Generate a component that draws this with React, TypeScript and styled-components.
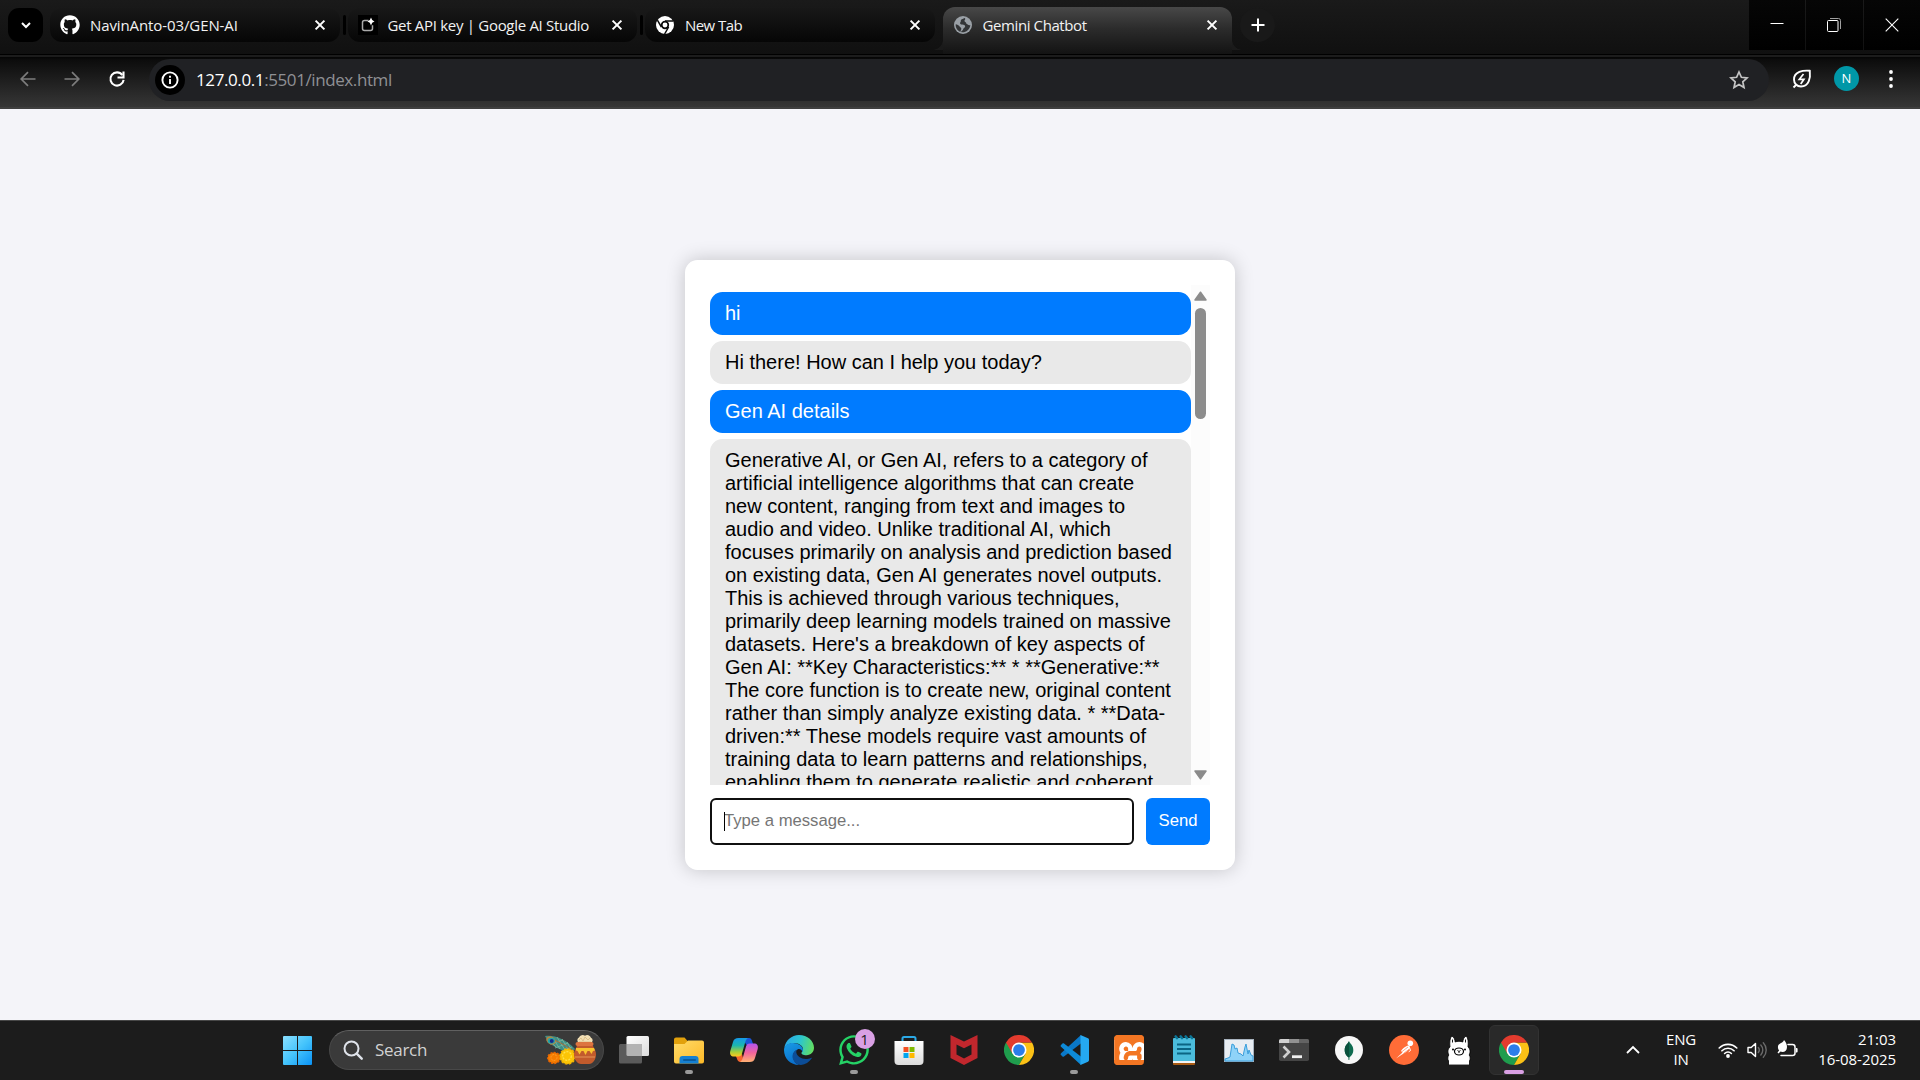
import React from "react";
import styled, { createGlobalStyle } from "styled-components";
import { FaGithub, FaWhatsapp } from "react-icons/fa";
import { SiXampp } from "react-icons/si";

const GlobalStyle = createGlobalStyle`
  * { box-sizing: border-box; }
  body { margin: 0; overflow: hidden; background: #f4f4f9; }
`;

const ui = `"Open Sans", "Noto Sans", sans-serif`;
const arial = `"Liberation Sans", Arial, sans-serif`;

const Screen = styled.div`
  width: 1920px;
  height: 1080px;
  display: flex;
  flex-direction: column;
  overflow: hidden;
  font-family: ${ui};
`;

/* ---------- browser chrome ---------- */

const TabStrip = styled.header`
  height: 54px;
  flex: none;
  display: flex;
  align-items: flex-start;
  background: linear-gradient(#1a1a1a, #101010);
`;

const TabSearch = styled.button`
  width: 35px;
  height: 34px;
  margin: 8px 7px 0 8px;
  padding: 0;
  border: 0;
  border-radius: 11px;
  background: #000;
  display: grid;
  place-items: center;
`;

const TabBox = styled.div<{ $active?: boolean }>`
  position: relative;
  width: 289.5px;
  height: ${(p) => (p.$active ? 47 : 34)}px;
  margin-top: ${(p) => (p.$active ? 7 : 8)}px;
  padding: 0 12px 0 10px;
  padding-bottom: ${(p) => (p.$active ? 12 : 0)}px;
  display: flex;
  align-items: center;
  color: #f2f2f2;
  border-radius: ${(p) => (p.$active ? "12px 12px 0 0" : "12px")};
  background: ${(p) =>
    p.$active ? "linear-gradient(#484848, #2c2c2c 45%, #131313)" : "linear-gradient(#181818, #060606)"};
  &::before,
  &::after {
    content: "";
    display: ${(p) => (p.$active ? "block" : "none")};
    position: absolute;
    bottom: 4px;
    width: 10px;
    height: 10px;
  }
  &::before {
    left: -10px;
    background: radial-gradient(circle at 0 0, transparent 9.5px, #1a1a1a 10px);
  }
  &::after {
    right: -10px;
    background: radial-gradient(circle at 100% 0, transparent 9.5px, #1a1a1a 10px);
  }
`;

const Favicon = styled.span`
  width: 20px;
  height: 20px;
  display: grid;
  place-items: center;
`;

const TabTitle = styled.span<{ $spacing?: number }>`
  flex: 1;
  margin-left: 10px;
  font-size: 15px;
  line-height: 20px;
  white-space: nowrap;
  letter-spacing: ${(p) => p.$spacing ?? 0}px;
`;

const Divider = styled.span<{ $hidden?: boolean }>`
  width: 3px;
  height: 20px;
  margin: 15px 2px 0 3px;
  border-radius: 2px;
  background: ${(p) => (p.$hidden ? "transparent" : "#000")};
`;

const NewTab = styled.button`
  width: 35px;
  height: 34px;
  margin: 8px 0 0 8px;
  padding: 0;
  border: 0;
  border-radius: 50%;
  background: #191919;
  display: grid;
  place-items: center;
`;

const WindowControls = styled.div`
  margin-left: auto;
  height: 50px;
  display: flex;
  gap: 1px;
`;

const WindowButton = styled.button`
  width: 56.4px;
  height: 50px;
  padding: 0;
  border: 0;
  background: linear-gradient(#060606, #000);
  display: grid;
  place-items: center;
`;

const Toolbar = styled.nav`
  height: 55px;
  flex: none;
  display: flex;
  align-items: center;
  border-top: 1px solid #000;
  border-bottom: 2px solid #3f3f3f;
  padding-bottom: 5px;
  background: linear-gradient(#1c1c1c 0, #1c1c1c 2px, #050505 2px, #0c0c0c 5px, #363636);
`;

const NavButton = styled.span<{ $left: number }>`
  width: 20px;
  height: 20px;
  margin-left: ${(p) => p.$left}px;
  display: grid;
  place-items: center;
`;

const AddressBar = styled.div`
  width: 1620px;
  height: 42px;
  margin: 3px 0 0 22px;
  padding: 0 20px 1px 6px;
  border-radius: 21px;
  background: #202124;
  display: flex;
  align-items: center;
`;

const InfoBadge = styled.span`
  width: 30px;
  height: 30px;
  border-radius: 50%;
  background: #000;
  display: grid;
  place-items: center;
`;

const Url = styled.span`
  flex: 1;
  margin-left: 11px;
  font-size: 17px;
  line-height: 24px;
  letter-spacing: -0.4px;
  color: #8f9094;
  b {
    font-weight: 400;
    color: #fff;
  }
`;

const Avatar = styled.span`
  width: 25px;
  height: 25px;
  margin-left: 22px;
  border-radius: 50%;
  background: #0097a7;
  color: #fff;
  font-size: 13px;
  line-height: 25px;
  text-align: center;
`;

/* ---------- chat page ---------- */

const Page = styled.main`
  height: 911px;
  flex: none;
  padding-top: 151px;
  display: flex;
  justify-content: center;
  align-items: flex-start;
  background: #f4f4f9;
  font-family: ${arial};
`;

const Card = styled.section`
  width: 550px;
  height: 610px;
  padding: 25px;
  border-radius: 12.5px;
  background: #fff;
  box-shadow: 0 0 18.75px rgba(0, 0, 0, 0.2);
`;

const ChatArea = styled.div`
  height: 500px;
  display: flex;
  overflow: hidden;
`;

const Messages = styled.div`
  width: 481px;
  height: 500px;
  padding-top: 7px;
  display: flex;
  flex-direction: column;
  gap: 6px;
  overflow: hidden;
`;

const Bubble = styled.div<{ $user?: boolean }>`
  flex: none;
  padding: 10px 15px;
  border-radius: 12.5px;
  font-size: 20px;
  line-height: 23px;
  color: ${(p) => (p.$user ? "#fff" : "#000")};
  background: ${(p) => (p.$user ? "#007bff" : "#e9e9e9")};
`;

const ScrollTrack = styled.div`
  width: 19px;
  height: 500px;
  padding: 6px 0 5px;
  display: flex;
  flex-direction: column;
  align-items: center;
  background: #fcfcfc;
`;

const ScrollThumb = styled.div`
  width: 11px;
  height: 111px;
  margin: 7px 0 auto;
  border-radius: 6px;
  background: #8b8b8b;
`;

const Composer = styled.form`
  height: 47px;
  margin-top: 13px;
  display: flex;
  gap: 12px;
`;

const Field = styled.div`
  position: relative;
  width: 424px;
  height: 47px;
`;

const Input = styled.input`
  width: 100%;
  height: 100%;
  padding: 0 12px 1px;
  border: 2px solid #101010;
  border-radius: 6px;
  outline: 0;
  background: #fff;
  font-family: ${arial};
  font-size: 16.67px;
  caret-color: transparent;
  &::placeholder {
    color: #757575;
    opacity: 1;
  }
`;

const Caret = styled.span`
  position: absolute;
  left: 14px;
  top: 14px;
  width: 1px;
  height: 19px;
  background: #000;
`;

const Send = styled.button`
  width: 64px;
  height: 47px;
  padding: 0 0 2px;
  border: 0;
  border-radius: 6px;
  background: #007bff;
  color: #fff;
  font-family: ${arial};
  font-size: 16.67px;
`;

/* ---------- taskbar ---------- */

const Taskbar = styled.footer`
  height: 60px;
  flex: none;
  display: flex;
  align-items: center;
  padding: 0 24px 1px 283px;
  border-top: 1px solid #474747;
  background: #1c1c1c;
  color: #fff;
`;

const SearchBox = styled.div`
  width: 275px;
  height: 40px;
  margin: 0 2px 0 17px;
  padding: 0 6px 0 13px;
  display: flex;
  align-items: center;
  border: 1px solid #484848;
  border-top-color: #606060;
  border-radius: 20px;
  background: #3a3a3a;
`;

const SearchText = styled.span`
  flex: 1;
  margin-left: 12px;
  font-size: 17px;
  letter-spacing: -0.3px;
  line-height: 24px;
  color: #d2d2d2;
`;

const Slot = styled.div<{ $active?: boolean }>`
  position: relative;
  width: 50px;
  height: 50px;
  margin: 0 2.5px;
  display: grid;
  place-items: center;
  border-radius: 6px;
  border: 1px solid ${(p) => (p.$active ? "#323232" : "transparent")};
  background: ${(p) => (p.$active ? "#292929" : "transparent")};
`;

const RunMark = styled.span<{ $active?: boolean }>`
  position: absolute;
  bottom: 0;
  left: 50%;
  transform: translateX(-50%);
  width: ${(p) => (p.$active ? 20 : 8)}px;
  height: 4px;
  border-radius: 2px;
  background: ${(p) => (p.$active ? "#d9a0e4" : "#9a9a9a")};
`;

const Badge = styled.span`
  position: absolute;
  left: 25px;
  top: 3px;
  width: 20px;
  height: 20px;
  border-radius: 50%;
  background: #d9a0e4;
  color: #1c1c1c;
  font-size: 15px;
  line-height: 20px;
  text-align: center;
`;

const Tray = styled.div`
  margin-left: auto;
  display: flex;
  align-items: center;
`;

const TrayText = styled.div<{ $align: string; $width: number }>`
  width: ${(p) => p.$width}px;
  margin-bottom: 3px;
  font-size: 15px;
  line-height: 20px;
  letter-spacing: ${(p) => (p.$align === "right" ? -0.05 : -0.15)}px;
  text-align: ${(p) => p.$align};
  white-space: nowrap;
`;

const TrayIcons = styled.div`
  display: flex;
  align-items: center;
  gap: 9px;
  margin: 0 0 0 -4px;
`;

const XamppBox = styled.span`
  width: 30px;
  height: 30px;
  display: grid;
  place-items: center;
  border-radius: 4px;
  overflow: hidden;
  background: linear-gradient(#f37623 0 5px, #fff 5px 25px, #f37623 25px);
`;

/* ---------- drawings ---------- */

const Svg = ({ s = 30, h, v, children }: { s?: number; h?: number; v?: string; children: React.ReactNode }) => (
  <svg width={s} height={h ?? s} viewBox={v ?? `0 0 ${s} ${h ?? s}`} fill="none" display="block">
    {children}
  </svg>
);

const CloseIcon = () => (
  <Svg s={16}>
    <path d="M3.6 3.6l8.8 8.8M12.4 3.6l-8.8 8.8" stroke="#fff" strokeWidth="2" />
  </Svg>
);

const StudioIcon = () => (
  <Svg s={20}>
    <rect width="20" height="20" fill="#000" />
    <path d="M10.5 5.5H6.5a2 2 0 0 0-2 2v6a2 2 0 0 0 2 2h6a2 2 0 0 0 2-2v-3.2" stroke="#a9a9a9" strokeWidth="1.5" />
    <path d="M13 2.6q.6 3.1 3.5 3.9-2.9.8-3.5 3.9-.6-3.1-3.5-3.9 2.9-.8 3.5-3.9z" fill="#fff" />
  </Svg>
);

const MonoChromeIcon = () => (
  <Svg s={18}>
    <circle cx="9" cy="9" r="9" fill="#fff" />
    <circle cx="9" cy="9" r="3.3" stroke="#0b0b0b" strokeWidth="1.7" />
    <path d="M9 4.9h8M5.4 11L1.4 4.2M12.6 11l-4 7" stroke="#0b0b0b" strokeWidth="1.5" />
  </Svg>
);

const GlobeIcon = () => (
  <Svg s={18}>
    <circle cx="9" cy="9" r="9" fill="#9aa0a6" />
    <path
      d="M10.6 1.9c-1.4 1-2.7.8-3.6 2-.6.9.2 1.6-.6 2.4-.7.7-.3 2 .7 2.2 1.6.3 3.2-.2 3.9 1.2.6 1.3-.5 1.9-1.3 2.6-.6.6-.4 1.6-1.3 2.2-.6.5-1.3.7-1.3 1.6 3.9.9 8.9-1.8 9.2-7.1-1.6.6-2.6-.4-3.4-.9-.9-.6-.4-1.4-1.3-1.9-1-.5-1.4-1.1-1-1.9.4-.8 1.2-1.6 0-2.4z"
      fill="#333537"
    />
    <path d="M1.7 8.2c1.6.2 2.9.8 3.7 2 .8 1.3 1.9 1.4 1.9 2.6 0 1.1-.8 1.7-.7 3C3.6 15 1.5 12 1.7 8.2z" fill="#333537" />
  </Svg>
);

const ChromeIcon = () => (
  <Svg v="0 0 48 48">
    <path d="M3.2 12A24 24 0 0 0 24 48L34.4 30 24 24z" fill="#1f9d4d" />
    <path d="M44.8 12A24 24 0 0 1 24 48L34.4 30 24 12z" fill="#fbc116" />
    <path d="M24 12h20.8A24 24 0 0 0 3.2 12l10.4 18z" fill="#e33b2e" />
    <circle cx="24" cy="24" r="12" fill="#fff" />
    <circle cx="24" cy="24" r="9.4" fill="#2b7de9" />
  </Svg>
);

const StartIcon = () => (
  <Svg s={29}>
    <defs>
      <linearGradient id="win" x1="0" y1="0" x2="29" y2="29" gradientUnits="userSpaceOnUse">
        <stop stopColor="#8be0ff" />
        <stop offset=".5" stopColor="#45c4fc" />
        <stop offset="1" stopColor="#0a92f5" />
      </linearGradient>
    </defs>
    <path d="M1 0h13v14H0V1a1 1 0 0 1 1-1zM15 0h13a1 1 0 0 1 1 1v13H15zM0 15h14v14H1a1 1 0 0 1-1-1zM15 15h14v13a1 1 0 0 1-1 1H15z" fill="url(#win)" />
  </Svg>
);

const FestiveIcon = () => (
  <Svg s={52} h={30}>
    <path d="M0 1C8-.5 20 3 30 14l-2 3C17 17 4 11 0 1z" fill="#3f8f86" />
    <path d="M2 3l9 9M7 2l8 12M12 2l8 13M17 4l7 12M22 7l5 9M5 9l13-4M10 13l13-5M17 16l10-4" stroke="#7fb59a" strokeWidth=".8" />
    <path d="M2 2c9 3 18 8 27 14" stroke="#a36a3c" strokeWidth="1" />
    <ellipse cx="6" cy="5.5" rx="5" ry="3.8" transform="rotate(30 6 5.5)" fill="#b8843f" />
    <ellipse cx="6.3" cy="5.7" rx="3.7" ry="3" fill="#24a4a8" />
    <circle cx="6.7" cy="6" r="2" fill="#152a8e" />
    <ellipse cx="9" cy="23" rx="6.2" ry="5.4" fill="#f57c00" stroke="#e66400" strokeWidth="1.500" strokeDasharray="2 1.300" />
    <circle cx="9" cy="22.5" r="3" stroke="#ff9d2a" strokeDasharray="2 1" />
    <circle cx="22.5" cy="21.5" r="7.6" fill="#fbc505" stroke="#f3b300" strokeWidth="1.500" strokeDasharray="2.500 1.500" />
    <circle cx="22" cy="21" r="4.3" stroke="#ffe04a" strokeWidth="1.300" strokeDasharray="2 1.200" />
    <path d="M33 7a3 3 0 0 1 1-4.500A4 4 0 0 1 40 .8a4 4 0 0 1 6 2A3 3 0 0 1 47 7l-1 2H33z" fill="#f2dfb5" />
    <path d="M34 5l2-2 2 3 2-4 3 3 2-2M34 7h12" stroke="#d7b981" strokeWidth=".8" />
    <path d="M33 9h14l3 6c3 6-1 14-6 14h-8c-5 0-9-8-6-14z" fill="#c25b2c" />
    <rect x="30.500" y="7" width="18" height="4" rx="2" fill="#dd7440" />
    <path d="M31 13h18l1 2.500-2 .5-1.500 3-2-3-2 0-2 4-2-4h-2l-2 3.500-2-3.500-1.500-.5z" fill="#f9c42e" />
    <path d="M30 22h20" stroke="#e59656" strokeWidth="1" />
  </Svg>
);

const TaskViewIcon = () => (
  <Svg s={30} h={28}>
    <defs>
      <linearGradient id="tv" x1="0" y1="0" x2="1" y2="1">
        <stop stopColor="#fff" />
        <stop offset="1" stopColor="#dcdcdc" />
      </linearGradient>
    </defs>
    <rect x="7.500" width="22.500" height="20" rx="1.500" fill="url(#tv)" />
    <rect y="8" width="23" height="19.500" rx="1.500" fill="#636363" opacity=".9" />
    <path d="M7.500 8H23v12H9a1.500 1.500 0 0 1-1.500-1.500z" fill="#b3b3b3" />
  </Svg>
);

const FolderIcon = () => (
  <Svg>
    <defs>
      <linearGradient id="fold" x1="0" y1="0" x2="1" y2="1">
        <stop stopColor="#ffdc6a" />
        <stop offset="1" stopColor="#fdb927" />
      </linearGradient>
    </defs>
    <path d="M0 4.500A2 2 0 0 1 2 2.500h8.500l3.500 4V12H0z" fill="#e2a10c" />
    <path d="M0 9h10.500L14 5.500h14a2 2 0 0 1 2 2V26.500a2 2 0 0 1-2 2H2a2 2 0 0 1-2-2z" fill="url(#fold)" />
    <path d="M5.500 28.500V24a3 3 0 0 1 3-3h13a3 3 0 0 1 3 3v4.500z" fill="#1580d2" />
    <rect x="9" y="24.200" width="13" height="1.600" rx=".8" fill="#07508f" />
  </Svg>
);

const CopilotIcon = () => (
  <Svg>
    <defs>
      <linearGradient id="cpa" x1="0" y1="0" x2="0" y2="1">
        <stop stopColor="#1599e8" />
        <stop offset=".4" stopColor="#1bb6b0" />
        <stop offset=".75" stopColor="#a6cf3a" />
        <stop offset="1" stopColor="#ffc81f" />
      </linearGradient>
      <linearGradient id="cpb" x1="0" y1="0" x2="0" y2="1">
        <stop stopColor="#b354ee" />
        <stop offset=".5" stopColor="#f2639c" />
        <stop offset="1" stopColor="#ffb173" />
      </linearGradient>
    </defs>
    <path d="M13 3h7c2 0 2.600 1.400 3.200 3.400L24.500 10h-7z" fill="#1a55d8" />
    <path d="M6 19h7l2 8h-3.500c-2 0-3-1.500-3.600-3.500z" fill="#f5652f" />
    <path d="M9.500 3H19c-1.500.8-2.200 2.200-2.800 4.200L13 18.500c-.6 2-1.700 3-3.700 3H5c-3 0-4.600-2-3.700-5.500l2.700-9C4.900 4 6.500 3 9.500 3z" fill="url(#cpa)" />
    <path d="M20.500 27H11c1.500-.8 2.200-2.200 2.800-4.200L17 11.500c.6-2 1.700-3 3.700-3H25c3 0 4.600 2 3.700 5.500l-2.700 9c-.9 3-2.500 4-5.500 4z" fill="url(#cpb)" />
  </Svg>
);

const EdgeIcon = () => (
  <Svg>
    <defs>
      <linearGradient id="eda" x1="0" y1="6" x2="30" y2="14" gradientUnits="userSpaceOnUse">
        <stop stopColor="#2aa6ea" />
        <stop offset=".5" stopColor="#2cc5cf" />
        <stop offset="1" stopColor="#66e05a" />
      </linearGradient>
      <linearGradient id="edb" x1="0" y1="10" x2="10" y2="30" gradientUnits="userSpaceOnUse">
        <stop stopColor="#1799e4" />
        <stop offset="1" stopColor="#0a6cc9" />
      </linearGradient>
    </defs>
    <path d="M.3 13C1.500 5.500 7.500 0 15 0c8.500 0 15 6 15 12.800 0 4.400-3.200 7.400-7.500 7.400-3.500 0-5.500-1.400-5-2.500.8-1.200 1.500-2 1.500-3.700C19 11 15 8 10 8 5 8 1.500 10.500.3 13z" fill="url(#eda)" />
    <path d="M0 15C0 10.500 4 8 9 8s10 3 10 7c0 .8-.2 1.600-.5 2-.7-2.500-3-3.500-5-2.500C10 16 8 20 9.500 24c1 3 3 5 5.500 6C6.500 30 0 23.500 0 15z" fill="url(#edb)" />
    <path d="M13 14.700C9 16.500 7.700 20.500 9 24c1.300 3.800 4.500 6 8 5.900 4.500-.4 8-2.700 10.600-6.400.4-.6-.1-.9-.7-.6-1.700.8-3.300 1-5 1-5 0-9-3-9.600-6.500-.1-1 .1-2 .7-2.700z" fill="#0c4d97" />
  </Svg>
);

const StoreIcon = () => (
  <Svg>
    <defs>
      <linearGradient id="st" x1="0" y1="0" x2="0" y2="1">
        <stop stopColor="#fff" />
        <stop offset="1" stopColor="#dcdcdc" />
      </linearGradient>
    </defs>
    <path d="M8.500 7V3.500a1.500 1.500 0 0 1 1.500-1.500h10a1.500 1.500 0 0 1 1.500 1.500V7" stroke="#2ba9e6" strokeWidth="2" />
    <path d="M.5 6h29v20a4 4 0 0 1-4 4h-21a4 4 0 0 1-4-4z" fill="url(#st)" />
    <path d="M9.500 12h5v5h-5z" fill="#f25022" />
    <path d="M15.500 12h5v5h-5z" fill="#7fba00" />
    <path d="M9.500 18h5v5h-5z" fill="#00a4ef" />
    <path d="M15.500 18h5v5h-5z" fill="#ffb900" />
  </Svg>
);

const CodeIcon = () => (
  <Svg>
    <path d="M22 0L2 18.200a1.200 1.200 0 0 0 0 1.800l1.500 1.400c.4.400 1 .4 1.500.1L22.500 8z" fill="#0a78c8" />
    <path d="M22 30L2 11.800A1.200 1.200 0 0 1 2 10l1.500-1.400c.4-.4 1-.4 1.500-.1L22.500 22z" fill="#0d8ad8" />
    <path d="M21.500 0l7.500 3.200a1.800 1.800 0 0 1 1 1.700v20.200a1.800 1.800 0 0 1-1 1.700L21.500 30z" fill="#25a9f2" />
  </Svg>
);

const NotepadIcon = () => (
  <Svg s={24} h={30}>
    <path d="M1 26h22v3a1 1 0 0 1-1 1H2a1 1 0 0 1-1-1z" fill="#a85a12" />
    <path d="M1 25h22v3H1z" fill="#f3f3f3" />
    <path d="M1 4a1 1 0 0 1 1-1h20a1 1 0 0 1 1 1v22H1z" fill="#4bbcdb" />
    <path d="M5 9.500h14M5 14h14M5 18.500h14" stroke="#0b6583" strokeWidth="1.800" />
    {[4.5, 9.5, 14.5, 19.5].map((x) => (
      <path key={x} d={`M${x - 0.8} 1.500l1.300 1.500`} stroke="#0b7698" strokeWidth="2.600" strokeLinecap="round" />
    ))}
  </Svg>
);

const PerfIcon = () => (
  <Svg s={30} h={23}>
    <rect x=".5" y=".5" width="29" height="22" fill="#e8edf2" stroke="#a9b4c0" />
    <path d="M1 20l3-1 2-1 2-13 2 1 1 4 2-1 1 5 3 1 2 2 2-9 1-3 2 10 1-4 2 5 2 1v5H1z" fill="#8fd3f8" stroke="#3a9edb" strokeWidth="1" />
  </Svg>
);

const TerminalIcon = () => (
  <Svg s={30} h={22}>
    <rect width="30" height="22" rx="1.800" fill="#454545" />
    <path d="M0 4V1.800A1.800 1.800 0 0 1 1.800 0H10v4z" fill="#d0d0d0" />
    <path d="M10 0h10v4H10z" fill="#919191" />
    <path d="M20 0h8.200A1.800 1.800 0 0 1 30 1.800V4H20z" fill="#636363" />
    <path d="M4.500 7.500l5.500 5.500-5.500 5.500" stroke="#cfcfcf" strokeWidth="2.600" />
    <path d="M13 16.300h10v2.800H13z" fill="#f0f0f0" />
  </Svg>
);

const LlamaIcon = () => (
  <Svg>
    <path
      d="M4.500 30v-4c-1-2-1-4 .3-6C3.500 17.500 3.500 14 6 12 5.500 8 5.700 3 7.700 1c2.200.5 3.300 3.500 3.500 6 2-1 5.600-1 7.600 0 .2-2.500 1.300-5.500 3.500-6 2 2 2.200 7 1.700 11 2.500 2 2.500 5.500 1.200 8 1.300 2 1.300 4 .3 6v4z"
      fill="#fff"
      stroke="#000"
      strokeWidth=".8"
    />
    <ellipse cx="15" cy="16.500" rx="4.500" ry="3.500" stroke="#000" strokeWidth="1.200" />
    <circle cx="9" cy="14.500" r="1" fill="#000" />
    <circle cx="21" cy="14.500" r="1" fill="#000" />
    <path d="M13.500 15.500l1.500 1 1.500-1M15 16.500v1.500M8.500 4.500v3M21.500 4.500v3" stroke="#000" strokeWidth=".9" />
  </Svg>
);

const XamppIcon = () => (
  <XamppBox>
    <SiXampp size={37} color="#f37623" />
  </XamppBox>
);

const MongoIcon = () => (
  <Svg>
    <circle cx="15" cy="15" r="14" fill="#f7f7f7" />
    <path d="M15 6c.8 2.600 4.300 4 4.300 9 0 4-2.300 6-3.800 7.200L15.300 25h-.8l-.1-2.800C12.900 21 10.700 19 10.700 15c0-5 3.600-6.500 4.300-9z" fill="#0f6b4f" />
    <path d="M15 6c-.7 2.500-4.300 4-4.300 9 0 4 2.200 6 3.700 7.200H15z" fill="#09503c" />
  </Svg>
);

const PostmanIcon = () => (
  <Svg>
    <circle cx="15" cy="15" r="15" fill="#ff6c37" />
    <circle cx="21.300" cy="8.300" r="2.800" fill="#fff" />
    <path d="M19 10.500c-3 1-5.500 3-7 5.500l1.500 1.500L7 23.500l6-4 2.500-1.500c3-1.500 5-3.500 5.700-6.200z" fill="#fff" />
    <path d="M12.500 17l6.500-5M14.500 18.500l6-4.500" stroke="#ff6c37" strokeWidth=".6" />
    <path d="M20.500 12.500l1 3-1.800 1.300" stroke="#fff" strokeWidth="1" />
  </Svg>
);

const McAfeeIcon = () => (
  <Svg>
    <path d="M1.500 0L15 6.500 28.500 0v23L15 30 1.500 23zM7.500 9.500v10L15 23.500l7.500-4v-10L15 13.300z" fill="#c1272d" fillRule="evenodd" />
  </Svg>
);

const WifiIcon = () => (
  <Svg s={20}>
    <path d="M1.200 8a12.500 12.500 0 0 1 17.600 0M3.900 10.800a8.700 8.700 0 0 1 12.200 0M6.600 13.500a4.900 4.900 0 0 1 6.800 0" stroke="#fff" strokeWidth="1.600" strokeLinecap="round" />
    <circle cx="10" cy="16" r="1.900" fill="#fff" />
  </Svg>
);

const SpeakerIcon = () => (
  <Svg s={21} h={20}>
    <path d="M1 7.500h3.200L8.500 3.500v13L4.200 12.500H1z" stroke="#fff" strokeWidth="1.400" strokeLinejoin="round" />
    <path d="M11.300 7.500a3.800 3.800 0 0 1 0 5M13.800 5a7.300 7.300 0 0 1 0 10M16.300 2.700a10.600 10.600 0 0 1 0 14.600" stroke="#6a6a6a" strokeWidth="1.400" strokeLinecap="round" />
  </Svg>
);

const BatteryIcon = () => (
  <Svg s={22} h={20}>
    <path d="M11 4.500h4.500a2.500 2.500 0 0 1 2.500 2.500v6a2.500 2.500 0 0 1-2.500 2.500H4" stroke="#fff" strokeWidth="1.500" strokeLinecap="round" />
    <path d="M19 8v4.500h.6a1 1 0 0 0 1-1V9a1 1 0 0 0-1-1z" fill="#fff" />
    <path d="M7 0C8.800 2 10 4.300 10 7c0 3.200-2 5-4.500 5-.8 0-1.500-.2-2-.5L1.500 13.500.5 12.500l1.600-2C0 7.500.7 4.500 4 3 5.500 2.300 6.500 1.300 7 0z" fill="#fff" />
  </Svg>
);

const tasks: { icon: React.ReactNode; running?: boolean; active?: boolean; badge?: string }[] = [
  { icon: <TaskViewIcon /> },
  { icon: <FolderIcon />, running: true },
  { icon: <CopilotIcon /> },
  { icon: <EdgeIcon /> },
  { icon: <FaWhatsapp size={34} color="#25d366" />, running: true, badge: "1" },
  { icon: <StoreIcon /> },
  { icon: <McAfeeIcon /> },
  { icon: <ChromeIcon /> },
  { icon: <CodeIcon />, running: true },
  { icon: <XamppIcon /> },
  { icon: <NotepadIcon /> },
  { icon: <PerfIcon /> },
  { icon: <TerminalIcon /> },
  { icon: <MongoIcon /> },
  { icon: <PostmanIcon /> },
  { icon: <LlamaIcon /> },
  { icon: <ChromeIcon />, running: true, active: true },
];

const tabs = [
  { title: "NavinAnto-03/GEN-AI", icon: <FaGithub size={20} color="#fff" />, spacing: -0.1 },
  { title: "Get API key | Google AI Studio", icon: <StudioIcon />, spacing: -0.3 },
  { title: "New Tab", icon: <MonoChromeIcon />, spacing: -0.55 },
  { title: "Gemini Chatbot", icon: <GlobeIcon />, spacing: -0.4, active: true },
];

const messages = [
  { user: true, text: "hi" },
  { user: false, text: "Hi there! How can I help you today?" },
  { user: true, text: "Gen AI details" },
  {
    user: false,
    text: "Generative AI, or Gen AI, refers to a category of artificial intelligence algorithms that can create new content, ranging from text and images to audio and video. Unlike traditional AI, which focuses primarily on analysis and prediction based on existing data, Gen AI generates novel outputs. This is achieved through various techniques, primarily deep learning models trained on massive datasets. Here's a breakdown of key aspects of Gen AI: **Key Characteristics:** * **Generative:** The core function is to create new, original content rather than simply analyze existing data. * **Data-driven:** These models require vast amounts of training data to learn patterns and relationships, enabling them to generate realistic and coherent",
  },
];

export default function App() {
  return (
    <Screen>
      <GlobalStyle />
      <TabStrip>
        <TabSearch>
          <Svg s={12}>
            <path d="M2 4l4 4 4-4" stroke="#fff" strokeWidth="2" />
          </Svg>
        </TabSearch>
        {tabs.map((t, i) => (
          <React.Fragment key={t.title}>
            <TabBox $active={t.active}>
              <Favicon>{t.icon}</Favicon>
              <TabTitle $spacing={t.spacing}>{t.title}</TabTitle>
              <CloseIcon />
            </TabBox>
            {i < 3 && <Divider $hidden={i === 2} />}
          </React.Fragment>
        ))}
        <NewTab>
          <Svg s={16}>
            <path d="M8 1.500v13M1.500 8h13" stroke="#fff" strokeWidth="2" />
          </Svg>
        </NewTab>
        <WindowControls>
          <WindowButton>
            <Svg s={14}>
              <path d="M.5 5.500h13" stroke="#fff" />
            </Svg>
          </WindowButton>
          <WindowButton>
            <Svg s={14}>
              <path d="M3 .5h8.500a2 2 0 0 1 2 2V11" stroke="#a0a0a0" />
              <rect x=".5" y="2.500" width="10.500" height="11" rx="1" stroke="#fff" />
            </Svg>
          </WindowButton>
          <WindowButton>
            <Svg s={14}>
              <path d="M.7.7l12.600 12.600M13.300.7L.7 13.300" stroke="#fff" strokeWidth="1.100" />
            </Svg>
          </WindowButton>
        </WindowControls>
      </TabStrip>
      <Toolbar>
        <NavButton $left={18}>
          <Svg s={16}>
            <path d="M15.500 8H1.500M8 1.200L1.200 8 8 14.800" stroke="#7d7d7d" strokeWidth="1.700" />
          </Svg>
        </NavButton>
        <NavButton $left={24}>
          <Svg s={16}>
            <path d="M.5 8h14M8 1.200L14.800 8 8 14.800" stroke="#7d7d7d" strokeWidth="1.700" />
          </Svg>
        </NavButton>
        <NavButton $left={25}>
          <Svg s={18}>
            <path d="M14.300 5A6.600 6.600 0 1 0 15.600 9.800" stroke="#fff" strokeWidth="2.100" />
            <path d="M15.500 1.500v6h-6" stroke="#fff" strokeWidth="2.100" />
          </Svg>
        </NavButton>
        <AddressBar>
          <InfoBadge>
            <Svg s={18}>
              <circle cx="9" cy="9" r="7.600" stroke="#fff" strokeWidth="1.900" />
              <path d="M9 8v5M9 4.800v1.900" stroke="#fff" strokeWidth="1.900" />
            </Svg>
          </InfoBadge>
          <Url>
            <b>127.0.0.1</b>:5501/index.html
          </Url>
          <Svg s={20}>
            <path d="M10 2l2.400 5.300 5.700.6-4.300 3.900 1.200 5.700L10 14.600l-5 2.900 1.200-5.700L1.900 7.900l5.700-.6z" stroke="#c4c4c4" strokeWidth="1.700" />
          </Svg>
        </AddressBar>
        <NavButton $left={23}>
          <Svg s={20}>
            <path d="M17.800 1.800C11 1.200 2 2.500 2 10.500c0 4 3 7 7 7 8 0 9.600-8.500 8.800-15.700zM1.500 18.500l3-3" stroke="#fff" strokeWidth="1.900" />
            <path d="M11.500 5l-4.200 5.300h4.600L8.700 15" stroke="#fff" strokeWidth="1.700" />
          </Svg>
        </NavButton>
        <Avatar>N</Avatar>
        <NavButton $left={22}>
          <Svg s={18}>
            <circle cx="9" cy="2" r="1.900" fill="#fff" />
            <circle cx="9" cy="9" r="1.900" fill="#fff" />
            <circle cx="9" cy="16" r="1.900" fill="#fff" />
          </Svg>
        </NavButton>
      </Toolbar>
      <Page>
        <Card>
          <ChatArea>
            <Messages>
              {messages.map((m) => (
                <Bubble key={m.text} $user={m.user}>
                  {m.text}
                </Bubble>
              ))}
            </Messages>
            <ScrollTrack>
              <Svg s={13} h={10}>
                <path d="M6.500 1.200L12 9H1z" fill="#8b8b8b" stroke="#8b8b8b" strokeWidth="1.500" strokeLinejoin="round" />
              </Svg>
              <ScrollThumb />
              <Svg s={13} h={10}>
                <path d="M6.500 8.800L12 1H1z" fill="#8b8b8b" stroke="#8b8b8b" strokeWidth="1.500" strokeLinejoin="round" />
              </Svg>
            </ScrollTrack>
          </ChatArea>
          <Composer>
            <Field>
              <Input placeholder="Type a message..." />
              <Caret />
            </Field>
            <Send type="button">Send</Send>
          </Composer>
        </Card>
      </Page>
      <Taskbar>
        <StartIcon />
        <SearchBox>
          <Svg s={20}>
            <circle cx="8.500" cy="8.500" r="7" stroke="#dfe3ea" strokeWidth="2" />
            <path d="M13.700 13.700l5 5" stroke="#dfe3ea" strokeWidth="2.400" strokeLinecap="round" />
          </Svg>
          <SearchText>Search</SearchText>
          <FestiveIcon />
        </SearchBox>
        {tasks.map((t, i) => (
          <Slot key={i} $active={t.active}>
            {t.icon}
            {t.badge && <Badge>{t.badge}</Badge>}
            {t.running && <RunMark $active={t.active} />}
          </Slot>
        ))}
        <Tray>
          <Svg s={14} h={10}>
            <path d="M1 8l6-6 6 6" stroke="#fff" strokeWidth="1.800" />
          </Svg>
          <TrayText $align="center" $width={82}>
            ENG
            <br />
            IN
          </TrayText>
          <TrayIcons>
            <WifiIcon />
            <SpeakerIcon />
            <BatteryIcon />
          </TrayIcons>
          <TrayText $align="right" $width={97}>
            21:03
            <br />
            16-08-2025
          </TrayText>
        </Tray>
      </Taskbar>
    </Screen>
  );
}
